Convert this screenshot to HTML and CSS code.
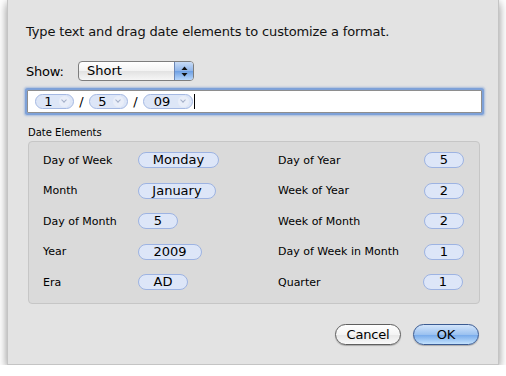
FILE: index.html
```html
<!DOCTYPE html>
<html>
<head>
  <title>Date Format</title>
  <link rel="stylesheet" href="styles.css">
</head>
<body>
  <div class="sheet">
    <p class="intro">Type text and drag date elements to customize a format.</p>

    <div class="show-row">
      <span class="show-label">Show:</span>
      <div class="popup">
        <span class="popup-text">Short</span>
        <span class="popup-arrows">
          <svg width="7" height="11" viewBox="0 0 7 11">
            <path d="M3.5 0.5 L6.5 4 L0.5 4 Z" fill="#111"/>
            <path d="M3.5 10.5 L6.5 7 L0.5 7 Z" fill="#111"/>
          </svg>
        </span>
      </div>
    </div>

    <div class="token-field">
      <span class="ftoken ftoken-short">1<i class="chev"></i></span>
      <span class="sep">/</span>
      <span class="ftoken ftoken-short">5<i class="chev"></i></span>
      <span class="sep">/</span>
      <span class="ftoken ftoken-wide">09<i class="chev"></i></span>
      <span class="caret"></span>
    </div>

    <div class="group-title">Date Elements</div>
    <div class="group-box">
      <div class="col col-left">
        <div class="row"><span class="lbl">Day of Week</span><span class="tok" style="width: 81px">Monday</span></div>
        <div class="row"><span class="lbl">Month</span><span class="tok" style="width: 78px">January</span></div>
        <div class="row"><span class="lbl">Day of Month</span><span class="tok" style="width: 40px">5</span></div>
        <div class="row"><span class="lbl">Year</span><span class="tok" style="width: 64px">2009</span></div>
        <div class="row"><span class="lbl">Era</span><span class="tok" style="width: 50px">AD</span></div>
      </div>
      <div class="col col-right">
        <div class="row"><span class="lbl">Day of Year</span><span class="tok" style="width: 40px">5</span></div>
        <div class="row"><span class="lbl">Week of Year</span><span class="tok" style="width: 40px">2</span></div>
        <div class="row"><span class="lbl">Week of Month</span><span class="tok" style="width: 40px">2</span></div>
        <div class="row"><span class="lbl">Day of Week in Month</span><span class="tok" style="width: 40px">1</span></div>
        <div class="row"><span class="lbl">Quarter</span><span class="tok tok-last" style="width: 40px">1</span></div>
      </div>
    </div>

    <div class="buttons">
      <button class="btn btn-cancel">Cancel</button>
      <button class="btn btn-ok">OK</button>
    </div>
  </div>
</body>
</html>
```

FILE: styles.css
```css
body {
  margin: 0;
  background-color: #fff;
  font-family: "DejaVu Sans", sans-serif;
  color: #000;
}

.sheet {
  box-sizing: border-box;
  margin-left: 7px;
  width: 492px;
  height: 365px;
  background-color: #e3e3e3;
  border: 1px solid #c4c4c4;
  border-top: none;
  box-shadow: 0 3px 9px rgba(0, 0, 0, 0.45);
  padding: 24px 19px 0 18px;
}

.intro {
  margin: 0;
  font-size: 13px;
  line-height: 16px;
  letter-spacing: -0.15px;
  color: #111;
}

/* Строка "Show:" */
.show-row {
  display: flex;
  align-items: center;
  margin-top: 21px;
  height: 20px;
}

.show-label {
  font-size: 13px;
  width: 52px;
  letter-spacing: -0.2px;
}

.popup {
  box-sizing: border-box;
  display: flex;
  width: 116px;
  height: 20px;
  border: 1px solid #7d7d7d;
  border-radius: 4px;
  background: linear-gradient(#ffffff, #f3f3f3 50%, #e2e2e2 51%, #f6f6f6);
  overflow: hidden;
}

.popup-text {
  flex: 1;
  font-size: 13px;
  line-height: 18px;
  padding-left: 8px;
}

.popup-arrows {
  width: 18px;
  display: flex;
  align-items: center;
  justify-content: center;
  border-left: 1px solid #6b86b5;
  background: linear-gradient(#c9dcf6, #8fb5ea 50%, #6d9fe3 51%, #b7d6fb);
}

/* Поле с токенами */
.token-field {
  box-sizing: border-box;
  display: flex;
  align-items: center;
  margin-top: 9px;
  width: 455px;
  height: 23px;
  background-color: #fff;
  border: 1px solid #8e8e8e;
  box-shadow: 0 0 0 2px #7ea1d8, 0 0 2px 3px rgba(126, 161, 216, 0.6);
  border-radius: 1px;
  padding-left: 7px;
  margin-left: 1px;
}

.ftoken {
  box-sizing: border-box;
  position: relative;
  height: 15px;
  border: 1px solid #a5b9e3;
  border-radius: 8px;
  background-color: #dde6f7;
  font-size: 13px;
  line-height: 13px;
  text-align: center;
  padding-right: 12px;
}

.ftoken-short {
  width: 39px;
}

.ftoken-wide {
  width: 50px;
}

.chev {
  position: absolute;
  right: 3px;
  top: 1px;
  width: 11px;
  height: 11px;
  border-radius: 50%;
  background-color: #e9eef9;
}

.chev::after {
  content: "";
  position: absolute;
  left: 3px;
  top: 2px;
  width: 3px;
  height: 3px;
  border-right: 1px solid #a4b0c8;
  border-bottom: 1px solid #a4b0c8;
  transform: rotate(45deg);
}

.sep {
  font-size: 13px;
  width: 15px;
  text-align: center;
}

.caret {
  width: 1px;
  height: 15px;
  background-color: #000;
  margin-left: 1px;
}

/* Группа "Date Elements" */
.group-title {
  font-size: 10px;
  line-height: 13px;
  margin-top: 13px;
  margin-left: 2px;
}

.group-box {
  box-sizing: border-box;
  display: flex;
  margin-top: 2px;
  margin-left: 2px;
  width: 452px;
  height: 163px;
  border: 1px solid #c6c6c6;
  border-radius: 4px;
  background-color: #dadada;
  padding: 3px 15px 0 14px;
}

.col {
  display: flex;
  flex-direction: column;
}

.col-left {
  width: 235px;
}

.col-right {
  flex: 1;
}

.row {
  display: flex;
  align-items: center;
  height: 30.5px;
}

.lbl {
  font-size: 11px;
}

.col-left .lbl {
  width: 95px;
}

.col-right .lbl {
  flex: 1;
}

.tok {
  box-sizing: border-box;
  height: 16px;
  border: 1px solid #9db3e2;
  border-radius: 8px;
  background-color: #dde6f8;
  font-size: 13px;
  line-height: 14px;
  text-align: center;
}

.tok-last {
  margin-right: 1px;
}

/* Кнопки */
.buttons {
  display: flex;
  justify-content: flex-end;
  gap: 12px;
  margin-top: 20px;
}

.btn {
  box-sizing: border-box;
  width: 66px;
  height: 21px;
  border-radius: 11px;
  font-family: "DejaVu Sans", sans-serif;
  font-size: 13px;
  letter-spacing: -0.2px;
  padding: 0;
  color: #000;
}

.btn-cancel {
  border: 1px solid #5f5f5f;
  background: linear-gradient(#ffffff, #f4f4f4 50%, #e6e6e6 51%, #fafafa);
  box-shadow: 0 1px 1px rgba(0, 0, 0, 0.25);
}

.btn-ok {
  border: 1px solid #3b5b92;
  background: linear-gradient(#d3e5fb, #9cc2f0 50%, #74a8ea 51%, #c3e2fd);
  box-shadow: 0 1px 1px rgba(0, 0, 0, 0.25);
}
```
